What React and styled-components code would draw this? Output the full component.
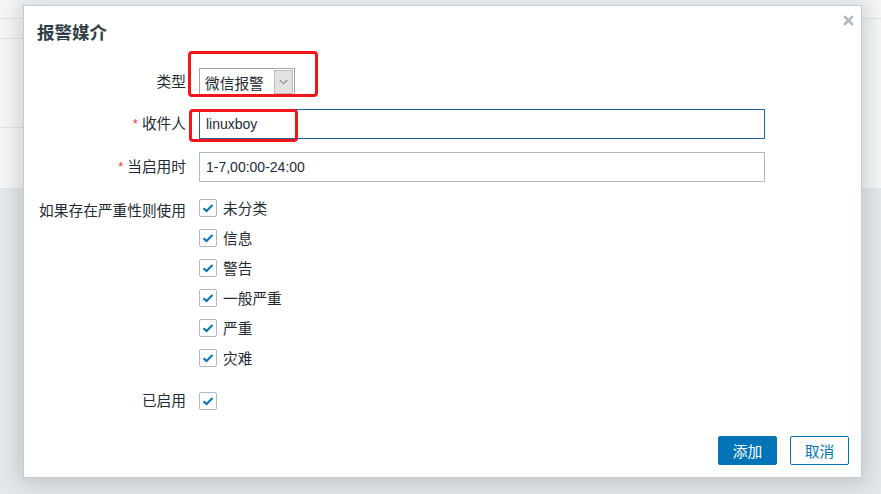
import React from "react";
import styled, { createGlobalStyle } from "styled-components";

const Global = createGlobalStyle`
  html, body { margin: 0; padding: 0; }
  body {
    font-family: "Liberation Sans", "Noto Sans CJK SC", sans-serif;
    color: #1f2c33;
    background: #e6e9eb;
  }
`;

const Page = styled.div`
  position: relative;
  width: 881px;
  height: 494px;
  overflow: hidden;
  background: #e6e9eb;
`;

const TopArea = styled.div`
  height: 189px;
  background: #f6f7f8;
  border-bottom: 1px solid #e1e5e8;
  box-sizing: border-box;
`;

const TopBar = styled.div`
  height: 18px;
  border-bottom: 1px solid #e3e6e8;
`;

const NavRow = styled.div`
  height: 19px;
  margin-right: 40px;
  border-bottom: 1px solid #e3e6e8;
`;

const ContentRow = styled.div`
  height: 88px;
  margin-right: 40px;
  border-bottom: 1px solid #e3e6e8;
`;

const Dialog = styled.div`
  position: absolute;
  left: 23px;
  top: 5px;
  width: 839px;
  box-sizing: border-box;
  background: #fff;
  border: 1px solid #c3ccd2;
  box-shadow: 0 2px 20px 5px rgba(110, 125, 135, 0.3);
  padding: 0 12px 12px 0;
`;

const Header = styled.div`
  padding: 15px 0 0 13px;
`;

const Title = styled.h4`
  margin: 0;
  font-size: 17.5px;
  line-height: 24px;
  font-weight: bold;
  color: #2f3e46;
`;

const Close = styled.button`
  position: absolute;
  right: 6px;
  top: 7px;
  width: 14px;
  height: 14px;
  padding: 0;
  border: 0;
  background: transparent;
  display: flex;
  align-items: center;
  justify-content: center;
`;

const Form = styled.div`
  margin-top: 23px;
  display: flex;
  flex-direction: column;
`;

const Row = styled.div`
  display: grid;
  grid-template-columns: 162px 1fr;
  column-gap: 13px;
  align-items: ${(p) => (p.$top ? "start" : "center")};
  margin-top: ${(p) => p.$gap || 0}px;
`;

const Label = styled.label`
  text-align: right;
  font-size: 14.7px;
  line-height: 18px;
  color: #1f2c33;
  white-space: nowrap;
  padding-top: ${(p) => p.$pt || 0}px;
`;

const Star = styled.span`
  color: #e8403f;
  font-size: 13px;
  margin-right: 4px;
  position: relative;
  top: -1px;
`;

const Select = styled.div`
  width: 96px;
  height: 28px;
  box-sizing: border-box;
  border: 1px solid #a6a6a6;
  display: flex;
  align-items: stretch;
  background: #fff;
`;

const SelectText = styled.span`
  flex: 1;
  padding-left: 5px;
  padding-top: 1px;
  font-size: 14.7px;
  line-height: 28px;
  color: #1f2c33;
  white-space: nowrap;
`;

const SelectBtn = styled.span`
  width: 19px;
  margin: 1px;
  background: #e2e2e2;
  border: 1px solid #bdbdbd;
  box-sizing: border-box;
  display: flex;
  align-items: center;
  justify-content: center;
`;

const Input = styled.div`
  width: 566px;
  height: 30px;
  box-sizing: border-box;
  border: 1px solid ${(p) => (p.$focus ? "#1c65a4" : "#acbbc4")};
  padding-left: 6px;
  font-size: 14px;
  line-height: 28px;
  color: #1f2c33;
  font-family: "Liberation Sans", "Noto Sans CJK SC", sans-serif;
`;

const CheckList = styled.div`
  display: flex;
  flex-direction: column;
  gap: 12px;
`;

const CheckItem = styled.div`
  display: flex;
  align-items: center;
  gap: 6px;
  height: 18px;
`;

const Box = styled.span`
  width: 18px;
  height: 18px;
  box-sizing: border-box;
  border: 1px solid #acbbc4;
  border-radius: 2px;
  background: #fff;
  display: flex;
  align-items: center;
  justify-content: center;
`;

const CheckText = styled.span`
  font-size: 14.7px;
  line-height: 18px;
  padding-top: 2px;
  color: #1f2c33;
`;

const Footer = styled.div`
  margin-top: 26px;
  display: flex;
  justify-content: flex-end;
  gap: 13px;
`;

const Button = styled.button`
  width: 59px;
  height: 29px;
  box-sizing: border-box;
  border: 1px solid #0275b8;
  border-radius: 2px;
  background: ${(p) => (p.$primary ? "#0275b8" : "#fff")};
  color: ${(p) => (p.$primary ? "#fff" : "#0275b8")};
  font-family: "Liberation Sans", "Noto Sans CJK SC", sans-serif;
  font-size: 14.7px;
  padding: 0;
`;

const Mark = styled.div`
  position: absolute;
  left: ${(p) => p.$x}px;
  top: ${(p) => p.$y}px;
  width: ${(p) => p.$w}px;
  height: ${(p) => p.$h}px;
  box-sizing: border-box;
  border: 3px solid #f2161b;
  border-radius: 4px;
  pointer-events: none;
`;

const Check = () => (
  <svg width="12" height="10" viewBox="0 0 12 10">
    <path d="M1.5 5.2 L4.5 8 L10.5 2" fill="none" stroke="#0275b8" strokeWidth="2" />
  </svg>
);

const CheckBox = ({ label }) => (
  <CheckItem>
    <Box>
      <Check />
    </Box>
    {label && <CheckText>{label}</CheckText>}
  </CheckItem>
);

const severities = ["未分类", "信息", "警告", "一般严重", "严重", "灾难"];

export default function App() {
  return (
    <>
      <Global />
      <Page>
        <TopArea>
          <TopBar />
          <NavRow />
          <ContentRow />
        </TopArea>
        <Dialog>
          <Header>
            <Title>报警媒介</Title>
          </Header>
          <Close aria-label="close">
            <svg width="11" height="11" viewBox="0 0 11 11">
              <path d="M1.2 1.2 L9.8 9.8 M9.8 1.2 L1.2 9.8" stroke="#aeb8be" strokeWidth="2.6" />
            </svg>
          </Close>
          <Form>
            <Row>
              <Label>类型</Label>
              <Select>
                <SelectText>微信报警</SelectText>
                <SelectBtn>
                  <svg width="9" height="6" viewBox="0 0 9 6">
                    <path d="M0.5 0.8 L4.5 4.8 L8.5 0.8" fill="none" stroke="#606060" strokeWidth="1" />
                  </svg>
                </SelectBtn>
              </Select>
            </Row>
            <Row $gap={13}>
              <Label>
                <Star>*</Star>收件人
              </Label>
              <Input $focus>linuxboy</Input>
            </Row>
            <Row $gap={13}>
              <Label>
                <Star>*</Star>当启用时
              </Label>
              <Input>1-7,00:00-24:00</Input>
            </Row>
            <Row $gap={17} $top>
              <Label $pt={3}>如果存在严重性则使用</Label>
              <CheckList>
                {severities.map((s) => (
                  <CheckBox key={s} label={s} />
                ))}
              </CheckList>
            </Row>
            <Row $gap={25}>
              <Label>已启用</Label>
              <CheckBox />
            </Row>
          </Form>
          <Footer>
            <Button $primary>添加</Button>
            <Button>取消</Button>
          </Footer>
        </Dialog>
        <Mark $x={188} $y={51} $w={130} $h={46} />
        <Mark $x={189} $y={109} $w={109} $h={33} />
      </Page>
    </>
  );
}
